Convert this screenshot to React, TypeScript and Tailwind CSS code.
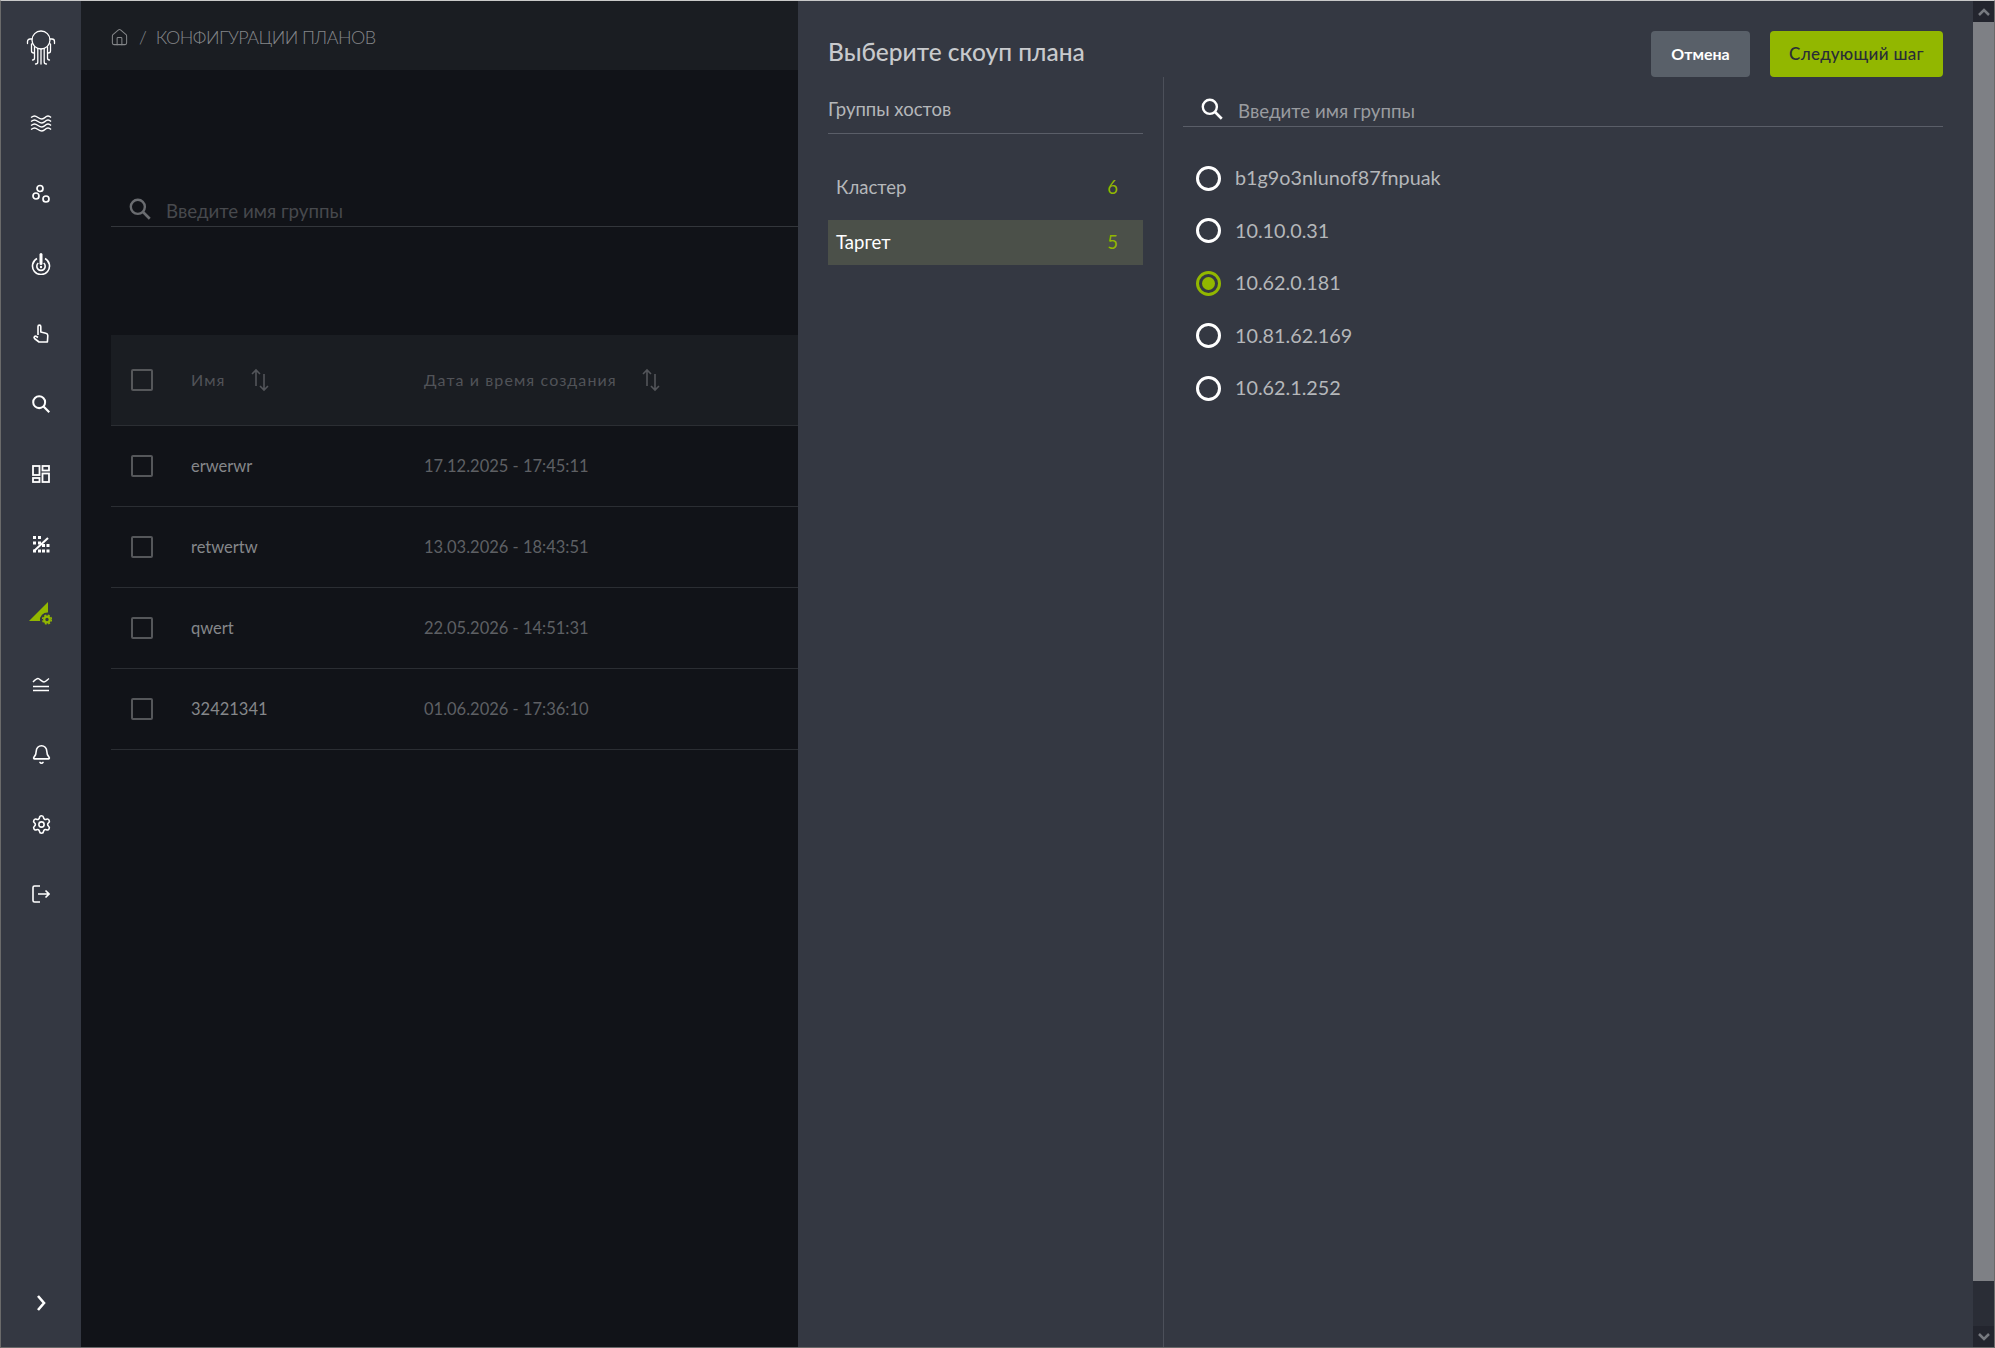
import { Bell, Home, Settings } from 'lucide-react';
import type { ReactNode } from 'react';

const font = { fontFamily: '"Lato", "Noto Sans", sans-serif' };

const rows = [
  { name: 'erwerwr', date: '17.12.2025 - 17:45:11' },
  { name: 'retwertw', date: '13.03.2026 - 18:43:51' },
  { name: 'qwert', date: '22.05.2026 - 14:51:31' },
  { name: '32421341', date: '01.06.2026 - 17:36:10' },
];

const hosts = ['b1g9o3nlunof87fnpuak', '10.10.0.31', '10.62.0.181', '10.81.62.169', '10.62.1.252'];

function Logo() {
  return (
    <svg width="30" height="36" viewBox="0 0 30 36" fill="none" stroke="white" strokeWidth="1.300" strokeLinecap="round">
      <circle cx="15" cy="10" r="9" />
      <path d="M6 9H4C2.500 9 1.500 10 1.500 11.500V13.500M24 9h2c1.500 0 2.500 1 2.500 2.500v2" />
      <path d="M5.500 14v7c0 1.500.7 2 2.500 2M24.500 14v7c0 1.500-.7 2-2.500 2" />
      <path d="M8.500 17v11c0 1.500-.7 2-2 2M21.500 17v11c0 1.500.7 2 2 2" />
      <path d="M11.800 18.500V32c0 1-.7 2-2.300 2M18.200 18.500V32c0 1 .7 2 2.300 2" />
      <path d="M15 19v15" />
    </svg>
  );
}

function SearchGlyph({ size, color }: { size: number; color: string }) {
  return (
    <svg width={size} height={size} viewBox="0 0 24 24" fill="none" stroke={color} strokeWidth="2.200">
      <circle cx="10" cy="10" r="6.500" />
      <path d="M14.800 14.800L21 21" strokeWidth="2.400" />
    </svg>
  );
}

function WavesIcon() {
  return (
    <svg width="22" height="18" viewBox="0 0 22 18" fill="none" stroke="white" strokeWidth="1.500">
      <path d="M1 2.500c3-2 4-2 7 0s5 2 7 0 4-2 6 0" />
      <path d="M1 6.500c3-2 4-2 7 0s5 2 7 0 4-2 6 0" />
      <path d="M1 10.500c3-2 4-2 7 0s5 2 7 0 4-2 6 0" />
      <path d="M1 14.500c3-2 4-2 7 0s5 2 7 0 4-2 6 0" />
    </svg>
  );
}

function DotsIcon() {
  return (
    <svg width="18" height="20" viewBox="0 0 18 20" fill="none" stroke="white" strokeWidth="1.700">
      <circle cx="8" cy="4.500" r="3" />
      <circle cx="4" cy="12" r="3" />
      <circle cx="14" cy="15" r="3" />
    </svg>
  );
}

function TargetIcon() {
  return (
    <svg width="20" height="22" viewBox="0 0 20 22" fill="none" stroke="white" strokeWidth="1.600">
      <path d="M6 5.500a8.500 8.500 0 1 0 8 0" />
      <path d="M7.300 10a4.200 4.200 0 1 0 5.400 0" />
      <path d="M10 1.500v9" strokeWidth="3" strokeLinecap="round" />
      <circle cx="10" cy="14" r="1.200" fill="white" stroke="none" />
    </svg>
  );
}

function HandIcon() {
  return (
    <svg width="18" height="20" viewBox="0 0 18 20" fill="none" stroke="white" strokeWidth="1.600" strokeLinejoin="round">
      <path d="M6 11V2.500c0-1.800 2.800-1.800 2.800 0V8l5 1.200c1.300.3 2 1.200 2 2.400l-.4 6.400H7L2.500 14.500c-1.200-1.300.5-3 2-2L6 13.500" />
    </svg>
  );
}

function DashboardIcon() {
  return (
    <svg width="18" height="18" viewBox="0 0 18 18" fill="none" stroke="white" strokeWidth="1.800">
      <rect x="1" y="1" width="6.500" height="9" />
      <rect x="10.500" y="1" width="6.500" height="4.500" />
      <rect x="1" y="13" width="6.500" height="4" />
      <rect x="10.500" y="8.500" width="6.500" height="8.500" />
    </svg>
  );
}

function GridPercentIcon() {
  return (
    <svg width="18" height="18" viewBox="0 0 18 18" fill="white">
      <path d="M2 16L16 3" stroke="white" strokeWidth="2" />
      <rect x="1" y="1" width="3" height="3" />
      <rect x="6" y="1" width="3" height="3" />
      <rect x="1" y="6.500" width="3" height="3" />
      <rect x="6" y="6.500" width="3" height="3" />
      <rect x="10" y="9" width="3" height="3" />
      <rect x="14.500" y="9" width="3" height="3" />
      <rect x="1" y="14.500" width="3" height="3" />
      <rect x="6" y="14.500" width="3" height="3" />
      <rect x="10" y="14.500" width="3" height="3" />
      <rect x="14.500" y="14.500" width="3" height="3" />
    </svg>
  );
}

function PlanIcon() {
  return (
    <svg width="26" height="26" viewBox="0 0 26 26" fill="#92b700">
      <path d="M1 20L20 1V11.500A7.500 7.500 0 0 0 12 20z" />
      <circle cx="19" cy="18.500" r="2.800" fill="none" stroke="#92b700" strokeWidth="2.200" />
      <circle cx="19" cy="18.500" r="4.400" fill="none" stroke="#92b700" strokeWidth="1.400" strokeDasharray="2 1.500" />
    </svg>
  );
}

function LayersIcon() {
  return (
    <svg width="18" height="16" viewBox="0 0 18 16" fill="none" stroke="white" strokeWidth="1.500">
      <path d="M1 6c2-2 3.500-3.500 5-3.500S10 6 12 6s3-2 5-3.500" />
      <path d="M1 10.500h16M1 14.500h16" />
    </svg>
  );
}

function LogoutIcon() {
  return (
    <svg width="18" height="18" viewBox="0 0 18 18" fill="none" stroke="white" strokeWidth="1.600">
      <path d="M8 1H2.500A1.500 1.500 0 0 0 1 2.500v13A1.500 1.500 0 0 0 2.500 17H8" />
      <path d="M6 9h11M13.500 5.500L17 9l-3.500 3.500" />
    </svg>
  );
}

function SortIcon() {
  return (
    <svg width="20" height="24" viewBox="0 0 20 24" fill="none" stroke="#53555a" strokeWidth="1.600">
      <path d="M6 18V2M2 6l4-4 4 4" />
      <path d="M14 6v16M10 18l4 4 4-4" />
    </svg>
  );
}

function SearchField({ tone, text }: { tone: string; text: string }) {
  return (
    <div className="flex items-center h-[34px] pl-[16px]">
      <SearchGlyph size={26} color={tone} />
      <span className={`ml-[13px] pt-[5px] text-[18.700px] ${text}`}>Введите имя группы</span>
    </div>
  );
}

function Checkbox() {
  return <div className="w-[22px] h-[22px] rounded-[2px] border-2 border-[#55575a]" />;
}

function NavItem({ children }: { children: ReactNode }) {
  return <div className="h-[70px] flex items-center justify-center shrink-0">{children}</div>;
}

function Radio({ active }: { active: boolean }) {
  return (
    <div className={`w-[25px] h-[25px] rounded-full border-[3px] flex items-center justify-center ${active ? 'border-[#92b700]' : 'border-white'}`}>
      {active && <div className="w-[13px] h-[13px] rounded-full bg-[#92b700]" />}
    </div>
  );
}

export default function App() {
  return (
    <div style={font} className="w-[1995px] h-[1348px] flex overflow-hidden bg-[#111318] border-t border-t-[#c9c9c9] border-l border-l-[#6a6a6a] border-r border-r-[#6a6a6a] border-b border-b-[#6a6a6a]">
      <aside className="w-[80px] shrink-0 bg-[#343842] flex flex-col">
        <div className="h-[88px] flex items-center justify-center shrink-0 pt-[6px]">
          <Logo />
        </div>
        <NavItem><WavesIcon /></NavItem>
        <NavItem><DotsIcon /></NavItem>
        <NavItem><TargetIcon /></NavItem>
        <NavItem><HandIcon /></NavItem>
        <NavItem><SearchGlyph size={22} color="white" /></NavItem>
        <NavItem><DashboardIcon /></NavItem>
        <NavItem><GridPercentIcon /></NavItem>
        <NavItem><PlanIcon /></NavItem>
        <NavItem><LayersIcon /></NavItem>
        <NavItem><Bell size={21} color="white" strokeWidth={1.800} /></NavItem>
        <NavItem><Settings size={21} color="white" strokeWidth={1.800} /></NavItem>
        <NavItem><LogoutIcon /></NavItem>
        <div className="mt-auto h-[89px] flex items-center justify-center">
          <svg width="10" height="16" viewBox="0 0 10 16" fill="none" stroke="white" strokeWidth="2.600"><path d="M2 1l6 7-6 7" /></svg>
        </div>
      </aside>

      <main className="w-[717px] shrink-0 flex flex-col">
        <div className="h-[69px] bg-[#1a1d22] flex items-center pl-[29px] pt-[3px] text-[18px] text-[#85878a] font-light shrink-0">
          <Home size={19} color="#85878a" strokeWidth={1.300} />
          <span className="ml-[10px]">/</span>
          <span className="ml-[9px] tracking-[-0.55px]">КОНФИГУРАЦИИ ПЛАНОВ</span>
        </div>
        <div className="pl-[30px] pt-[122px] flex flex-col">
          <div className="border-b border-b-[#33363b]">
            <SearchField tone="#6a6c70" text="text-[#47494d]" />
          </div>
          <div className="mt-[108px] h-[91px] bg-[#1a1d22] border-b border-b-[#2b2e33] flex items-center text-[16px] tracking-[1.100px] text-[#515358]">
            <div className="w-[80px] pl-[20px]"><Checkbox /></div>
            <div className="w-[233px] flex items-center">
              <span>Имя</span>
              <span className="ml-[24px]"><SortIcon /></span>
            </div>
            <div className="flex items-center">
              <span>Дата и время создания</span>
              <span className="ml-[24px]"><SortIcon /></span>
            </div>
          </div>
          {rows.map((row) => (
            <div key={row.name} className="h-[81px] border-b border-b-[#2b2e33] flex items-center text-[16.500px]">
              <div className="w-[80px] pl-[20px]"><Checkbox /></div>
              <div className="w-[233px] text-[#85878a]">{row.name}</div>
              <div className="text-[#5e6064]">{row.date}</div>
            </div>
          ))}
        </div>
      </main>

      <section className="flex-1 bg-[#343842] flex flex-col min-w-0">
        <div className="h-[76px] shrink-0 flex items-start justify-between pl-[30px] pr-[30px] pt-[30px]">
          <h1 className="text-[24.500px] font-medium text-[#c8cacd] leading-[40px] mt-[1px]">Выберите скоуп плана</h1>
          <div className="flex gap-[20px]">
            <button className="w-[99px] h-[46px] rounded-[4px] bg-[#596069] text-white text-[16px] font-bold">Отмена</button>
            <button className="w-[173px] h-[46px] rounded-[4px] bg-[#92b700] text-[#2a2e36] text-[17px] tracking-[0.3px] font-medium">Следующий шаг</button>
          </div>
        </div>
        <div className="flex-1 flex min-h-0">
          <div className="w-[366px] shrink-0 border-r border-r-[#4c505a] pl-[30px] pr-[20px]">
            <div className="h-[57px] border-b border-b-[#5a5e68] flex items-center pt-[9px] text-[18.500px] text-[#b5b7ba]">Группы хостов</div>
            <div className="mt-[31px] h-[45px] flex items-center justify-between pl-[8px] pr-[25px] text-[18.500px] text-[#b5b7ba]">
              <span>Кластер</span>
              <span className="text-[#92b700]">6</span>
            </div>
            <div className="mt-[10px] h-[45px] flex items-center justify-between pl-[8px] pr-[25px] text-[18.500px] bg-[#4b5049] text-white">
              <span>Таргет</span>
              <span className="text-[#92b700]">5</span>
            </div>
          </div>
          <div className="flex-1 pl-[19px] pr-[30px]">
            <div className="border-b border-b-[#5a5e68] mt-[15px]">
              <SearchField tone="white" text="text-[#9a9ca0]" />
            </div>
            <div className="flex flex-col mt-[25px]">
              {hosts.map((host) => (
                <div key={host} className="h-[52.500px] flex items-center gap-[14px] pl-[13px] text-[19.800px] text-[#b5b7ba]">
                  <Radio active={host === '10.62.0.181'} />
                  <span>{host}</span>
                </div>
              ))}
            </div>
          </div>
        </div>
      </section>

      <div className="w-[21px] shrink-0 bg-[#2a2d36] flex flex-col">
        <div className="h-[21px] bg-[#23252e] flex items-center justify-center">
          <svg width="12" height="8" viewBox="0 0 12 8" fill="none" stroke="#777a80" strokeWidth="2.500"><path d="M1 7l5-5 5 5" /></svg>
        </div>
        <div className="h-[1259px] bg-[#7e8085]" />
        <div className="mt-auto h-[21px] bg-[#23252e] flex items-center justify-center">
          <svg width="12" height="8" viewBox="0 0 12 8" fill="none" stroke="#777a80" strokeWidth="2.500"><path d="M1 1l5 5 5-5" /></svg>
        </div>
      </div>
    </div>
  );
}
